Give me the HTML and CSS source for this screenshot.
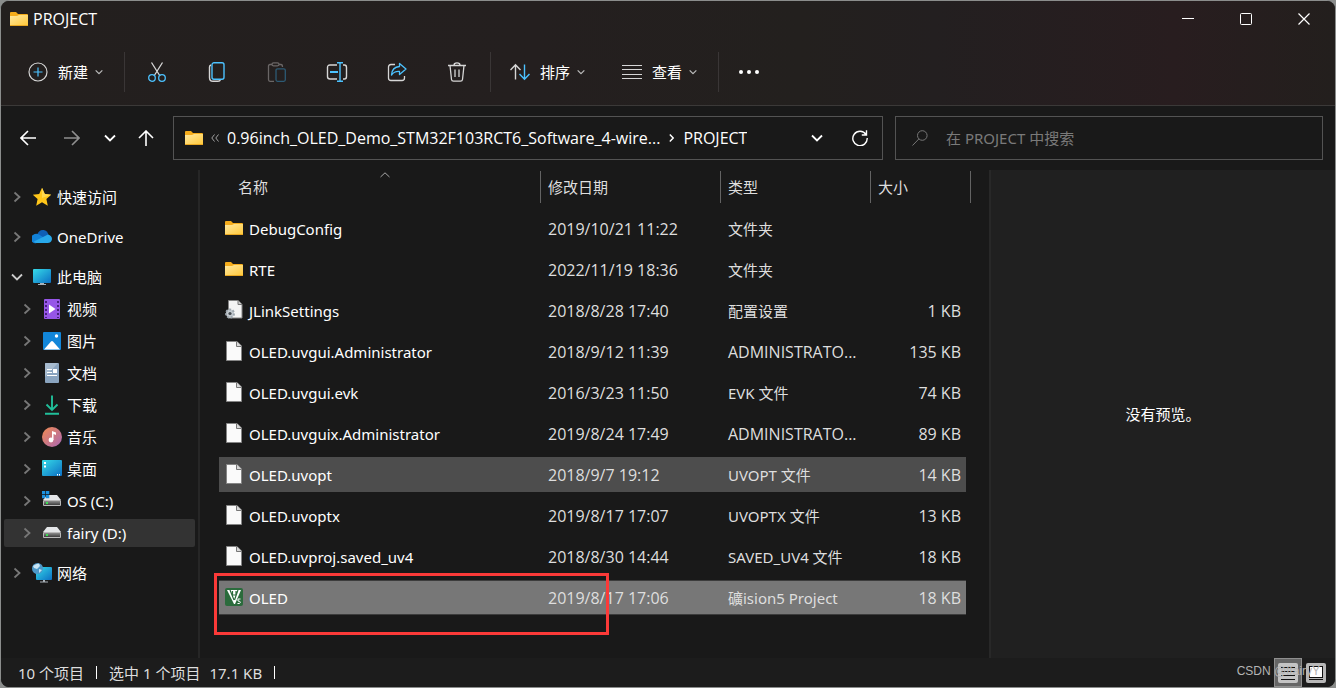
FILE: index.html
```html
<!DOCTYPE html>
<html lang="zh-CN">
<head>
<meta charset="utf-8">
<meta name="viewport" content="width=device-width, initial-scale=1">
<title>PROJECT</title>
<link rel="stylesheet" href="styles.css">
</head>
<body>
<svg class="sprite" width="0" height="0" aria-hidden="true">
  <defs>
    <linearGradient id="g-folder" x1="0" y1="0" x2="1" y2="1"><stop offset="0" stop-color="#ffe8a0"/><stop offset="1" stop-color="#ffc93c"/></linearGradient>
    <linearGradient id="g-screen" x1="0" y1="0" x2="1" y2="1"><stop offset="0" stop-color="#36dbe8"/><stop offset="1" stop-color="#0c6fc4"/></linearGradient>
    <linearGradient id="g-drive" x1="0" y1="0" x2="0" y2="1"><stop offset="0" stop-color="#8c8c8c"/><stop offset="1" stop-color="#3c3c3c"/></linearGradient>
    <symbol id="folder" viewBox="0 0 18 14"><path d="M0 1Q0 0 1 0H6L8 2H17Q18 2 18 3V13H0Z" fill="#f5ac1b"/><path d="M0 4H7L9 3H18V13H0Z" fill="url(#g-folder)"/><path d="M0 13H18V14H0Z" fill="#e8a722"/></symbol>
    <symbol id="file" viewBox="0 0 16 20"><path d="M.5.5H11L15.500 5V19.500H.5Z" fill="#fafafa" stroke="#858585"/><path d="M10.500.5V5.500H15.500" fill="#d9d9d9" stroke="#777"/></symbol>
    <symbol id="right" viewBox="0 0 8 12"><path d="M1.500 1.500L6.500 6L1.500 10.500" fill="none" stroke="currentColor" stroke-width="1.800"/></symbol>
    <symbol id="down" viewBox="0 0 12 8"><path d="M1 1.500L6 6.500L11 1.500" fill="none" stroke="currentColor" stroke-width="1.800"/></symbol>
    <symbol id="drive" viewBox="0 0 18 11"><path d="M4 0H14L18 5H0Z" fill="#e4e6e8"/><rect y="5" width="18" height="6" rx="1" fill="#b9b9b9"/><rect x="1" y="6" width="16" height="4" fill="url(#g-drive)"/><rect x="3" y="7" width="2" height="2" fill="#39e052"/></symbol>
  </defs>
</svg>
<div class="window">
  <header class="chrome">
    <div class="titlebar">
      <svg class="folder-icon" viewBox="0 0 18 14"><use href="#folder"/></svg>
      <h1 class="title">PROJECT</h1>
      <div class="captions">
        <button class="caption" aria-label="最小化"><svg width="12" height="12" viewBox="0 0 12 12"><path d="M0 5.500H12" stroke="#fff"/></svg></button>
        <button class="caption" aria-label="最大化"><svg width="12" height="12" viewBox="0 0 12 12"><rect x=".5" y=".5" width="11" height="11" rx="1" fill="none" stroke="#fff"/></svg></button>
        <button class="caption" aria-label="关闭"><svg width="12" height="12" viewBox="0 0 12 12"><path d="M.5.5L11.500 11.500M11.500.5L.5 11.500" stroke="#fff" stroke-width="1.200"/></svg></button>
      </div>
    </div>
    <div class="toolbar">
      <button class="tool">
        <svg width="20" height="20" viewBox="0 0 20 20" fill="none"><circle cx="10" cy="10" r="9" stroke="#d6d6d6" stroke-width="1.200"/><path d="M10 5.500V14.500M5.500 10H14.500" stroke="#4cc2ff" stroke-width="1.200"/></svg>
        <span>新建</span><svg class="tool-arrow" viewBox="0 0 12 8"><use href="#down"/></svg>
      </button>
      <span class="divider"></span>
      <div class="actions">
        <button class="action" aria-label="剪切"><svg width="20" height="20" viewBox="0 0 20 20" fill="none" stroke-width="1.300"><path d="M4.500.5L13 14M15.500.5L7 14" stroke="#d6d6d6"/><circle cx="5" cy="16" r="3.300" stroke="#4cc2ff"/><circle cx="15" cy="16" r="3.300" stroke="#4cc2ff"/></svg></button>
        <button class="action" aria-label="复制"><svg width="20" height="20" viewBox="0 0 20 20" fill="none" stroke-width="1.400"><path d="M4 3Q2.500 3.500 2.500 5V15.500Q2.500 19.300 6 19.300H11Q13 19.300 13.500 17.500" stroke="#d6d6d6"/><rect x="5" y=".8" width="12" height="16.400" rx="2" stroke="#4cc2ff"/></svg></button>
        <button class="action" aria-label="粘贴" disabled><svg width="20" height="20" viewBox="0 0 20 20" fill="none" stroke-width="1.300"><path d="M5 2.500H3Q1.500 2.500 1.500 4V17.500Q1.500 19.300 3 19.300H7M12 2.500H14Q15.500 2.500 15.500 5" stroke="#6a6666"/><rect x="5" y=".8" width="7" height="3" rx="1.500" stroke="#6a6666"/><rect x="9" y="6.800" width="9.300" height="12.500" rx="1.500" stroke="#2d5a74"/></svg></button>
        <button class="action" aria-label="重命名"><svg width="22" height="20" viewBox="0 0 22 20" fill="none" stroke-width="1.400"><path d="M11 3H4Q1.500 3 1.500 5.500V14.500Q1.500 17 4 17H11M17 3H18.500Q20.500 3 20.500 5.500V14.500Q20.500 17 18.500 17H17" stroke="#d6d6d6"/><path d="M14 .8V19.200M11 .8H17M11 19.200H17" stroke="#4cc2ff"/><path d="M4 10H12" stroke="#4cc2ff" stroke-width="2"/></svg></button>
        <button class="action" aria-label="共享"><svg width="20" height="20" viewBox="0 0 20 20" fill="none" stroke-width="1.300" stroke-linejoin="round"><path d="M8 2.500H4Q1.500 2.500 1.500 5V16Q1.500 18.500 4 18.500H15Q17.500 18.500 17.500 16V14" stroke="#d6d6d6"/><path d="M12.500 1.500L19 7L12.500 12.500V9.500Q7.500 9 4.500 13Q5 5 12.500 4.500Z" stroke="#4cc2ff"/></svg></button>
        <button class="action" aria-label="删除"><svg width="20" height="20" viewBox="0 0 20 20" fill="none" stroke="#d6d6d6" stroke-width="1.300"><path d="M1 3.500H19M7 3Q7 .8 10 .8Q13 .8 13 3M3 3.500L4.500 17.500Q4.700 19.200 6.500 19.200H13.500Q15.300 19.200 15.500 17.500L17 3.500M8 7.500V15M12 7.500V15"/></svg></button>
      </div>
      <span class="divider"></span>
      <button class="tool">
        <svg width="20" height="20" viewBox="0 0 20 20" fill="none" stroke-width="1.400"><path d="M5.500 17.500V3M.5 8L5.500 2.700L10.500 8" stroke="#d6d6d6"/><path d="M14.500 2.500V17M9.500 12L14.500 17.300L19.500 12" stroke="#4cc2ff"/></svg>
        <span>排序</span><svg class="tool-arrow" viewBox="0 0 12 8"><use href="#down"/></svg>
      </button>
      <button class="tool tool-view">
        <svg width="20" height="20" viewBox="0 0 20 20"><path d="M0 3.500H20M0 7.500H20M0 12.500H20M0 16.500H20" stroke="#d6d6d6"/></svg>
        <span>查看</span><svg class="tool-arrow" viewBox="0 0 12 8"><use href="#down"/></svg>
      </button>
      <span class="divider"></span>
      <button class="tool" aria-label="更多"><svg width="22" height="20" viewBox="0 0 22 20" fill="#fff"><circle cx="3" cy="10" r="2"/><circle cx="11" cy="10" r="2"/><circle cx="19" cy="10" r="2"/></svg></button>
    </div>
  </header>

  <nav class="navbar" aria-label="导航">
    <div class="history">
      <button class="nav-button" aria-label="后退"><svg width="16" height="16" viewBox="0 0 16 16"><path d="M16 8H1M8 1L1 8L8 15" fill="none" stroke="#fff" stroke-width="1.600"/></svg></button>
      <button class="nav-button nav-forward" aria-label="前进"><svg width="16" height="16" viewBox="0 0 16 16"><path d="M0 8H15M8 1L15 8L8 15" fill="none" stroke="#8f8f8f" stroke-width="1.600"/></svg></button>
      <button class="nav-button" aria-label="最近"><svg width="12" height="8" viewBox="0 0 12 8"><use href="#down"/></svg></button>
      <button class="nav-button" aria-label="向上"><svg width="16" height="16" viewBox="0 0 16 16"><path d="M8 16V1M1 8L8 1L15 8" fill="none" stroke="#fff" stroke-width="1.600"/></svg></button>
    </div>
    <div class="address">
      <svg class="folder-icon" viewBox="0 0 18 14"><use href="#folder"/></svg>
      <svg class="crumb-more" width="8" height="8" viewBox="0 0 8 8"><path d="M3.500.5L.8 4L3.500 7.500M7.500.5L4.800 4L7.500 7.500" fill="none" stroke="#a0a0a0"/></svg>
      <a class="crumb" href="#">0.96inch_OLED_Demo_STM32F103RCT6_Software_4-wire...</a>
      <svg class="crumb-sep" width="5" height="8" viewBox="0 0 5 8"><path d="M.8.5L4.200 4L.8 7.500" fill="none" stroke="#fff" stroke-width="1.400"/></svg>
      <a class="crumb" href="#">PROJECT</a>
      <button class="nav-button address-drop" aria-label="历史记录"><svg width="12" height="8" viewBox="0 0 12 8"><use href="#down"/></svg></button>
      <button class="nav-button" aria-label="刷新"><svg width="16" height="16" viewBox="0 0 16 16"><path d="M14 4.500A7.200 7.200 0 1 0 15.200 8M14.500.3V5H9.800" fill="none" stroke="#fff" stroke-width="1.400"/></svg></button>
    </div>
    <label class="search">
      <svg width="16" height="16" viewBox="0 0 16 16"><circle cx="10.300" cy="5.500" r="4.800" fill="none" stroke="#777"/><path d="M6.800 9L.5 15.500" stroke="#777"/></svg>
      <input class="search-input" type="text" placeholder="在 PROJECT 中搜索" aria-label="搜索">
    </label>
  </nav>

  <main class="content">
    <aside class="sidebar">
      <ul class="tree">
        <li class="node"><button class="toggle" aria-label="展开"><svg width="8" height="12" viewBox="0 0 8 12"><use href="#right"/></svg></button><svg class="node-icon" viewBox="0 0 20 20"><path d="M10 .8L12.800 7L19.200 7.700L14.400 12L15.800 18.700L10 15.300L4.200 18.700L5.600 12L.8 7.700L7.200 7Z" fill="#ffc61a"/><path d="M10 .8L12.800 7L19.200 7.700L10 11Z" fill="#ffd84d"/></svg><a class="node-link" href="#">快速访问</a></li>
        <li class="node top"><button class="toggle" aria-label="展开"><svg width="8" height="12" viewBox="0 0 8 12"><use href="#right"/></svg></button><svg class="node-icon" viewBox="0 0 20 20"><path d="M5 8Q7 2.500 11.500 3Q15.500 3.500 16.500 8L10 12Z" fill="#0f5fb6"/><path d="M4.500 16A4.400 4.400 0 0 1 1 8Q4 6 7 7.500L14 12V16Z" fill="#1282d8"/><path d="M16 7.500Q20 8.500 20 12Q19.500 16 15.500 16H4.500Q2.500 15.700 2 14.500Z" fill="#28a8ea"/></svg><a class="node-link" href="#">OneDrive</a></li>
        <li class="node top"><button class="toggle open" aria-label="折叠"><svg width="12" height="8" viewBox="0 0 12 8"><use href="#down"/></svg></button><svg class="node-icon" viewBox="0 0 20 20"><rect x="1" y="2" width="18" height="14" rx="1" fill="url(#g-screen)"/><path d="M8 16H12V17H14V18H6V17H8Z" fill="#a9b1b8"/></svg><a class="node-link" href="#">此电脑</a></li>
        <li class="node child"><button class="toggle" aria-label="展开"><svg width="8" height="12" viewBox="0 0 8 12"><use href="#right"/></svg></button><svg class="node-icon" viewBox="0 0 20 20"><rect x="2" width="16" height="20" rx="1" fill="#9656e8"/><path d="M4 2V19M16 2V19" stroke="#46217c" stroke-width="2" stroke-dasharray="2 2"/><path d="M7 5.500L13.500 10L7 14.500Z" fill="#fff"/></svg><a class="node-link" href="#">视频</a></li>
        <li class="node child"><button class="toggle" aria-label="展开"><svg width="8" height="12" viewBox="0 0 8 12"><use href="#right"/></svg></button><svg class="node-icon" viewBox="0 0 20 20"><rect x="1" y="1" width="18" height="18" rx="1" fill="#1286d9"/><path d="M2 18.500L9 10.500Q10 9.500 11 10.500L18 18.500Z" fill="#fff"/><circle cx="14.500" cy="5" r="1.700" fill="#fff"/></svg><a class="node-link" href="#">图片</a></li>
        <li class="node child"><button class="toggle" aria-label="展开"><svg width="8" height="12" viewBox="0 0 8 12"><use href="#right"/></svg></button><svg class="node-icon" viewBox="0 0 20 20"><rect x="3" width="14" height="20" rx="1" fill="#8aa4bf"/><path d="M3 1Q3 0 4 0H16L3 14Z" fill="#a7bbcf"/><path d="M5 6.500H10M5 9.500H10M5 12.500H15" stroke="#fff"/><rect x="11" y="6" width="4" height="4" fill="#fff"/></svg><a class="node-link" href="#">文档</a></li>
        <li class="node child"><button class="toggle" aria-label="展开"><svg width="8" height="12" viewBox="0 0 8 12"><use href="#right"/></svg></button><svg class="node-icon" viewBox="0 0 20 20"><path d="M10 .5V15M4.500 9.500L10 15L15.500 9.500M3 18.800H17" fill="none" stroke="#21bf9a" stroke-width="1.900"/></svg><a class="node-link" href="#">下载</a></li>
        <li class="node child"><button class="toggle" aria-label="展开"><svg width="8" height="12" viewBox="0 0 8 12"><use href="#right"/></svg></button><svg class="node-icon" viewBox="0 0 20 20"><linearGradient id="g-music" x1="0" y1="0" x2="1" y2="1"><stop offset="0" stop-color="#f28b50"/><stop offset="1" stop-color="#a967b5"/></linearGradient><circle cx="10" cy="10" r="10" fill="url(#g-music)"/><path d="M10 13V4L14 5.500V8L11.500 7V13Z" fill="#fff"/><circle cx="9" cy="13" r="2.400" fill="#fff"/></svg><a class="node-link" href="#">音乐</a></li>
        <li class="node child"><button class="toggle" aria-label="展开"><svg width="8" height="12" viewBox="0 0 8 12"><use href="#right"/></svg></button><svg class="node-icon" viewBox="0 0 20 20"><rect y="1" width="20" height="16" rx="1" fill="url(#g-screen)"/><path d="M2 3H4V5H2ZM2 6.500H4V8.500H2ZM15 15H16V16.500H15ZM17 15H18V16.500H17Z" fill="#fff"/></svg><a class="node-link" href="#">桌面</a></li>
        <li class="node child"><button class="toggle" aria-label="展开"><svg width="8" height="12" viewBox="0 0 8 12"><use href="#right"/></svg></button><svg class="node-icon" viewBox="0 0 20 20"><use href="#drive" x="1" y="4" width="18" height="11"/><path d="M0 0H3.300V3.300H0ZM4 0H7.300V3.300H4ZM0 4H3.300V7.300H0ZM4 4H7.300V7.300H4Z" fill="#1c91e0"/></svg><a class="node-link" href="#">OS (C:)</a></li>
        <li class="node child current"><button class="toggle" aria-label="展开"><svg width="8" height="12" viewBox="0 0 8 12"><use href="#right"/></svg></button><svg class="node-icon" viewBox="0 0 20 20"><use href="#drive" x="1" y="4" width="18" height="11"/></svg><a class="node-link" href="#">fairy (D:)</a></li>
        <li class="node top"><button class="toggle" aria-label="展开"><svg width="8" height="12" viewBox="0 0 8 12"><use href="#right"/></svg></button><svg class="node-icon" viewBox="0 0 20 20"><rect x="4" y="4" width="16" height="13" rx="1" fill="url(#g-screen)"/><path d="M11 17H13V18.500H16V19.500H8V18.500H11Z" fill="#a9b1b8"/><circle cx="5.500" cy="5.500" r="5.500" fill="#4d98c8"/><path d="M1 3Q4 .5 7 .5L8 3L5 6L2 5ZM7 6L10 7L7 10Z" fill="#c8e4f4"/></svg><a class="node-link" href="#">网络</a></li>
      </ul>
    </aside>

    <section class="files">
      <table class="list">
        <colgroup><col class="col-name"><col class="col-date"><col class="col-type"><col class="col-size"></colgroup>
        <thead>
          <tr>
            <th class="head-name"><button class="sort">名称</button><svg class="sort-mark" width="10" height="6" viewBox="0 0 10 6"><path d="M.5 5L5 .8L9.500 5" fill="none" stroke="#a8a8a8"/></svg></th>
            <th><button class="sort">修改日期</button></th>
            <th><button class="sort">类型</button></th>
            <th><button class="sort">大小</button></th>
          </tr>
        </thead>
        <tbody>
          <tr><td class="name"><div class="entry"><svg class="folder-icon" viewBox="0 0 18 14"><use href="#folder"/></svg><span>DebugConfig</span></div></td><td>2019/10/21 11:22</td><td class="han">文件夹</td><td class="size"></td></tr>
          <tr><td class="name"><div class="entry"><svg class="folder-icon" viewBox="0 0 18 14"><use href="#folder"/></svg><span>RTE</span></div></td><td>2022/11/19 18:36</td><td class="han">文件夹</td><td class="size"></td></tr>
          <tr><td class="name"><div class="entry"><svg class="file-icon" viewBox="0 0 18 20"><path d="M3.500.5H13L17 4.500V18H3.500Z" fill="#f4f4f4" stroke="#858585"/><path d="M13 .5V4.500H17" fill="#ccc" stroke="#777"/><circle cx="5" cy="13.500" r="4" fill="#c3cad0" stroke="#a0a9b0" stroke-width="2" stroke-dasharray="2 1.500"/><circle cx="5" cy="13.500" r="1.600" fill="#454b50"/></svg><span>JLinkSettings</span></div></td><td>2018/8/28 17:40</td><td class="han">配置设置</td><td class="size">1 KB</td></tr>
          <tr><td class="name"><div class="entry"><svg class="file-icon" viewBox="0 0 16 20"><use href="#file"/></svg><span>OLED.uvgui.Administrator</span></div></td><td>2018/9/12 11:39</td><td>ADMINISTRATO...</td><td class="size">135 KB</td></tr>
          <tr><td class="name"><div class="entry"><svg class="file-icon" viewBox="0 0 16 20"><use href="#file"/></svg><span>OLED.uvgui.evk</span></div></td><td>2016/3/23 11:50</td><td class="han">EVK 文件</td><td class="size">74 KB</td></tr>
          <tr><td class="name"><div class="entry"><svg class="file-icon" viewBox="0 0 16 20"><use href="#file"/></svg><span>OLED.uvguix.Administrator</span></div></td><td>2019/8/24 17:49</td><td>ADMINISTRATO...</td><td class="size">89 KB</td></tr>
          <tr class="hover"><td class="name"><div class="entry"><svg class="file-icon" viewBox="0 0 16 20"><use href="#file"/></svg><span>OLED.uvopt</span></div></td><td>2018/9/7 19:12</td><td class="han">UVOPT 文件</td><td class="size">14 KB</td></tr>
          <tr><td class="name"><div class="entry"><svg class="file-icon" viewBox="0 0 16 20"><use href="#file"/></svg><span>OLED.uvoptx</span></div></td><td>2019/8/17 17:07</td><td class="han">UVOPTX 文件</td><td class="size">13 KB</td></tr>
          <tr><td class="name"><div class="entry"><svg class="file-icon" viewBox="0 0 16 20"><use href="#file"/></svg><span>OLED.uvproj.saved_uv4</span></div></td><td>2018/8/30 14:44</td><td class="han">SAVED_UV4 文件</td><td class="size">18 KB</td></tr>
          <tr class="selected"><td class="name"><div class="entry"><svg class="file-icon" viewBox="0 0 18 18"><rect width="18" height="18" rx="2" fill="#2b6b3c"/><path d="M2 2H16L10 16H9Z" fill="#fff"/><path d="M5 2L9 12M7.500 3V7H11V3M13 2L9.500 12" fill="none" stroke="#2b6b3c" stroke-width="1.200"/><path d="M15.500 11H13V13Q15.500 13 15.300 14.500Q15 16 12.500 15.500" fill="none" stroke="#fff"/></svg><span>OLED</span></div><span class="marker"></span></td><td>2019/8/17 17:06</td><td class="han">礦ision5 Project</td><td class="size">18 KB</td></tr>
        </tbody>
      </table>
    </section>

    <aside class="preview"><p class="preview-text">没有预览。</p></aside>
  </main>

  <footer class="status">
    <span class="count">10 个项目</span>
    <span class="bar"></span>
    <span class="chosen">选中 1 个项目</span>
    <span class="total">17.1 KB</span>
    <span class="bar"></span>
    <div class="views">
      <button class="view active" aria-label="详细信息"><svg width="20" height="20" viewBox="0 0 20 20"><rect width="20" height="20" rx="2" fill="#c4c4c4"/><path d="M3 4.500H17M3 8.500H17M3 12.500H17M3 16.500H17" stroke="#111"/></svg></button>
      <button class="view" aria-label="大图标"><svg width="20" height="20" viewBox="0 0 20 20"><rect width="20" height="20" rx="2" fill="#b8b8b8"/><rect x="3.500" y="3.500" width="13" height="11" fill="#fff" stroke="#111"/><path d="M3 16.500H17" stroke="#111"/></svg></button>
    </div>
    <span class="watermark">CSDN @ffairyY</span>
  </footer>
</div>
</body>
</html>
```

FILE: styles.css
```css
* { box-sizing: border-box; }

body {
  margin: 0;
  background: #8b8d8c;
  color: #fff;
  font: 15px/20px "Noto Sans", "Noto Sans CJK SC", sans-serif;
}

button {
  padding: 0;
  border: 0;
  background: none;
  color: inherit;
  font: inherit;
}

a { color: inherit; text-decoration: none; }

svg { display: block; flex: none; }

.sprite { position: absolute; }

.window {
  display: flex;
  flex-direction: column;
  min-height: 100vh;
  border: 1px solid #8b8d8c;
  border-radius: 9px;
  background: #191919;
  overflow: hidden;
}

.chrome {
  border-bottom: 1px solid #3b3938;
  background: linear-gradient(90deg, #231f1e, #241f1f 40%, #23201e 60%, #231f20 70%, #281d1f 88%, #231f1d);
}

.titlebar {
  display: flex;
  align-items: center;
  gap: 5px;
  height: 36px;
  padding-left: 9px;
}

.folder-icon { width: 18px; height: 14px; }

.title,
.crumb {
  font-family: "Open Sans", "Noto Sans CJK SC", sans-serif;
  font-size: 16px;
}

.title { margin: 0; font-weight: 400; }

.captions { display: flex; margin: 0 2px 0 auto; }

.caption {
  display: grid;
  place-items: center;
  width: 58px;
  height: 36px;
}

.toolbar {
  display: flex;
  align-items: center;
  height: 68px;
  padding: 2px 0 0 27px;
}

.tool {
  display: flex;
  align-items: center;
  gap: 10px;
}

.tool-arrow { width: 8px; height: 6px; margin-left: -3px; color: #bbb; }

.tool-view { margin-left: 37px; }

.divider {
  width: 1px;
  height: 40px;
  margin: 0 19px 0 21px;
  background: #3a3636;
}

.actions { display: flex; gap: 40px; margin: 0 2px 0 3px; }

.action {
  display: flex;
  justify-content: center;
  width: 20px;
}

.navbar {
  display: grid;
  grid-template-columns: 141px minmax(0, 710fr) minmax(0, 428fr);
  align-items: center;
  gap: 12px;
  height: 64px;
  padding: 0 12px 0 19px;
}

.history { display: flex; gap: 20px; }

.nav-button { display: grid; place-items: center; min-width: 16px; height: 20px; }

.nav-forward { margin: 0 2px 0 8px; }

.address,
.search {
  display: flex;
  align-items: center;
  height: 44px;
  border: 1px solid #535353;
}

.address { padding: 0 14px 0 11px; }

.crumb-more { margin: 0 8px; }

.crumb { white-space: nowrap; overflow: hidden; }

.crumb-sep { margin: 0 9px; }

.address-drop { margin: 0 27px 0 auto; }

.search { gap: 18px; padding: 0 16px; }

.search-input {
  flex: 1;
  min-width: 0;
  padding: 0;
  border: 0;
  outline: 0;
  background: none;
  color: #fff;
  font: inherit;
}

.search-input::placeholder { color: #7a7a7a; opacity: 1; }

.content {
  display: grid;
  flex: 1;
  grid-template-columns: 199px 789fr 346fr;
}

.sidebar {
  padding: 13px 3px 20px;
  border-right: 2px solid #262626;
}

.tree {
  display: flex;
  flex-direction: column;
  gap: 4px;
  margin: 0;
  padding: 0;
  list-style: none;
}

.node {
  display: flex;
  align-items: center;
  height: 28px;
  padding-left: 6px;
}

.top { margin-top: 8px; }
.child { padding-left: 16px; }
.current { border-radius: 2px; background: #333; }

.toggle { display: grid; place-items: center; width: 14px; height: 20px; color: #777; }
.open { color: #ccc; }

.node-icon { width: 20px; height: 20px; margin: 0 5px 0 8px; }

.files { padding-left: 19px; }

.list {
  width: 752px;
  table-layout: fixed;
  border-spacing: 0;
}

.col-name { width: 322px; }
.col-date { width: 180px; }
.col-type { width: 150px; }
.col-size { width: 100px; }

th { position: relative; padding: 1px 0 5px; font-weight: 400; }

.sort {
  display: block;
  width: 100%;
  height: 32px;
  padding-left: 7px;
  border-right: 1px solid #636363;
  color: #dedede;
  text-align: left;
}

.head-name .sort { padding-left: 19px; }

.sort-mark { position: absolute; top: 2px; left: 50%; }

td {
  height: 41px;
  padding: 0 0 0 7px;
  border: solid transparent;
  border-width: 3px 0;
  background-clip: padding-box;
  color: #dedede;
  font-family: "Open Sans", "Noto Sans CJK SC", sans-serif;
  font-size: 16px;
  white-space: nowrap;
}

.name {
  position: relative;
  padding-left: 6px;
  color: #fff;
  font-family: "Noto Sans", "Noto Sans CJK SC", sans-serif;
  font-size: 15px;
}

.han { font-family: "Noto Sans", "Noto Sans CJK SC", sans-serif; font-size: 15px; }
.size { padding-right: 5px; border-right-width: 5px; text-align: right; }

.entry { display: flex; align-items: center; gap: 6px; }
.entry svg { margin-bottom: 2px; }

.file-icon { width: 18px; height: 20px; }

.hover td { background-color: #4d4d4d; }
.selected td { background-color: #777; box-shadow: inset 0 1px #3c3c3c, inset 0 -1px #3c3c3c; }

.marker {
  position: absolute;
  top: -7px;
  left: -5px;
  z-index: 1;
  width: 395px;
  height: 62px;
  border: 3px solid #fb3a38;
}

.preview {
  display: grid;
  place-items: center;
  border-left: 2px solid #282828;
  background: #202020;
}

.preview-text { margin: 0; }

.status {
  position: relative;
  display: flex;
  align-items: center;
  height: 29px;
  padding-left: 17px;
  background: #1c1c1c;
  color: #dedede;
}

.bar { width: 1px; height: 13px; margin: 0 12px; background: #fff; }

.total { margin-left: 9px; }

.views { display: flex; margin-left: auto; padding-right: 5px; }

.view {
  display: grid;
  place-items: center;
  width: 28px;
  height: 29px;
}

.active { border: 1px solid #8f8f8f; background: #666; }

.watermark {
  position: absolute;
  top: 3px;
  right: 15px;
  color: #b4b4b4;
  font: 12px/20px "Liberation Sans", sans-serif;
}
```
